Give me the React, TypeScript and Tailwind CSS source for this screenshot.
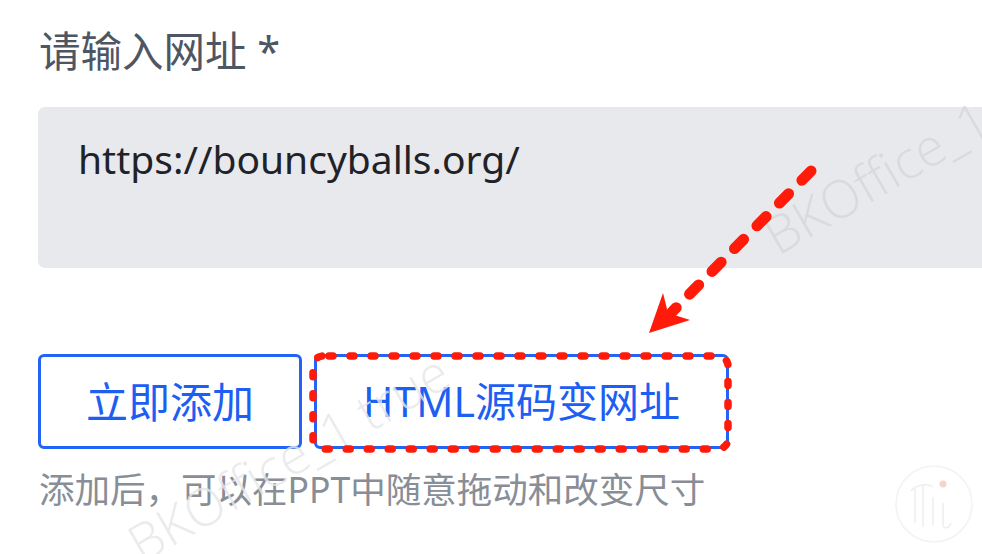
import React from "react";

const cjk = { fontFamily: '"Segoe UI","Noto Sans","Noto Sans CJK SC",sans-serif' };

export default function App() {
  return (
    <div className="relative w-[982px] h-[554px] overflow-hidden bg-white" style={cjk}>
      <div className="pl-[38px] pt-[22px] flex flex-col">
        <label className="text-[41.5px] leading-[58px] text-[#4f5663] pl-[1px]">请输入网址 *</label>
        <div className="mt-[27px] w-[1000px] h-[161px] rounded-[7px] bg-[#e8e9ed] pl-[40px] pt-[24px]">
          <span className="text-[39px] leading-[56px] text-[#1f2329]">https://bouncyballs.org/</span>
        </div>
        <div className="mt-[86px] flex gap-[12px]">
          <button className="w-[264px] h-[95px] rounded-[6px] border-[3px] border-[#2364f6] text-[#1d5ef3] text-[42px] leading-none">立即添加</button>
          <button className="w-[415px] h-[95px] rounded-[6px] border-[3px] border-[#2364f6] text-[#1d5ef3] text-[41px] leading-none">HTML源码变网址</button>
        </div>
        <p className="mt-[15px] pl-[1px] text-[35.5px] leading-[50px] text-[#888d96]">添加后，可以在PPT中随意拖动和改变尺寸</p>
      </div>

      {/* watermarks */}
      <div className="absolute left-[768px] top-[200px] text-[52px] text-[#d6d7db] opacity-80 -rotate-[30deg] origin-left whitespace-nowrap pointer-events-none" style={{ fontFamily: '"Open Sans",sans-serif', fontWeight: 300 }}>BKOffice_1</div>
      <div className="absolute left-[132px] top-[508px] text-[52px] text-[#e6e7e9] opacity-80 -rotate-[30deg] origin-left whitespace-nowrap pointer-events-none" style={{ fontFamily: '"Open Sans",sans-serif', fontWeight: 300 }}>BKOffice_1 true</div>

      {/* annotation overlay */}
      <svg className="absolute left-0 top-0 pointer-events-none" width="982" height="554">
        <rect x="313" y="356" width="415" height="93" rx="10" fill="none" stroke="#ff1a0a" strokeWidth="7.5" strokeLinecap="round" strokeDasharray="4 17" strokeDashoffset="-6" />
        <line x1="811" y1="171" x2="672" y2="312" stroke="#ff1a0a" strokeWidth="11" strokeLinecap="round" strokeDasharray="13 19" />
        <polygon points="649,333 663,293 668,313 690,320" fill="#ff1a0a" />
      </svg>

      {/* faint logo */}
      <svg className="absolute left-[893px] top-[463px] pointer-events-none" width="82" height="82" viewBox="0 0 82 82">
        <circle cx="41" cy="41" r="38" fill="none" stroke="#f3f3f3" strokeWidth="1.5" />
        <path d="M22 24 L22 60 M30 22 L30 64 M18 28 C 22 22, 34 20, 40 24 M40 34 L40 62 M50 40 L50 62 C 50 66, 56 66, 58 60" fill="none" stroke="#eeeeee" strokeWidth="1.5" />
        <circle cx="50" cy="21" r="3.5" fill="#f6d3cc" />
      </svg>
    </div>
  );
}
